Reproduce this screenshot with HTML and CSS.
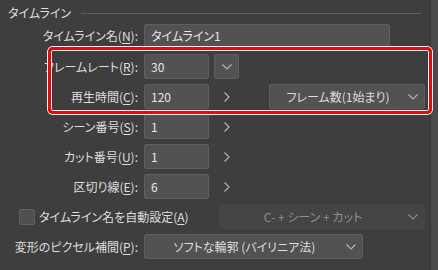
FILE: index.html
```html
<!DOCTYPE html>
<html lang="ja">
<head>
  <meta charset="UTF-8">
  <title>タイムライン</title>
  <link rel="stylesheet" href="styles.css">
</head>
<body>
  <div class="window">
    <div class="panel">
      <div class="section-head">
        <span class="section-title">タイムライン</span>
        <span class="section-line"></span>
      </div>

      <div class="row first">
        <label class="lbl">タイムライン名(<u>N</u>):</label>
        <div class="field wide">タイムライン1</div>
      </div>

      <div class="row">
        <label class="lbl">フレームレート(<u>R</u>):</label>
        <div class="field num">30</div>
        <div class="btn">
          <svg width="10" height="6" viewBox="0 0 10 6"><polyline points="0.5,0.5 5,5 9.5,0.5" /></svg>
        </div>
      </div>

      <div class="row">
        <label class="lbl">再生時間(<u>C</u>):</label>
        <div class="field num">120</div>
        <div class="arrow">
          <svg width="6" height="10" viewBox="0 0 6 10"><polyline points="0.5,0.5 5,5 0.5,9.5" /></svg>
        </div>
        <div class="select frames">
          <span class="select-text">フレーム数(1始まり)</span>
          <svg class="chev" width="10" height="6" viewBox="0 0 10 6"><polyline points="0.5,0.5 5,5 9.5,0.5" /></svg>
        </div>
      </div>

      <div class="row">
        <label class="lbl">シーン番号(<u>S</u>):</label>
        <div class="field num">1</div>
        <div class="arrow">
          <svg width="6" height="10" viewBox="0 0 6 10"><polyline points="0.5,0.5 5,5 0.5,9.5" /></svg>
        </div>
      </div>

      <div class="row">
        <label class="lbl">カット番号(<u>U</u>):</label>
        <div class="field num">1</div>
        <div class="arrow">
          <svg width="6" height="10" viewBox="0 0 6 10"><polyline points="0.5,0.5 5,5 0.5,9.5" /></svg>
        </div>
      </div>

      <div class="row">
        <label class="lbl">区切り線(<u>E</u>):</label>
        <div class="field num">6</div>
        <div class="arrow">
          <svg width="6" height="10" viewBox="0 0 6 10"><polyline points="0.5,0.5 5,5 0.5,9.5" /></svg>
        </div>
      </div>

      <div class="row">
        <span class="check"></span>
        <span class="check-label">タイムライン名を自動設定(<u>A</u>)</span>
        <div class="select auto disabled">
          <span class="select-text">C- + シーン + カット</span>
          <svg class="chev" width="10" height="6" viewBox="0 0 10 6"><polyline points="0.5,0.5 5,5 9.5,0.5" /></svg>
        </div>
      </div>

      <div class="row">
        <label class="lbl">変形のピクセル補間(<u>P</u>):</label>
        <div class="select interp">
          <span class="select-text">ソフトな輪郭 (バイリニア法)</span>
          <svg class="chev" width="10" height="6" viewBox="0 0 10 6"><polyline points="0.5,0.5 5,5 9.5,0.5" /></svg>
        </div>
      </div>

      <div class="highlight"></div>
    </div>
    <div class="scrollbar"></div>
  </div>
</body>
</html>
```

FILE: styles.css
```css
body { margin: 0; background: #3e3e3e; font-family: "Noto Sans CJK JP", "Noto Sans", sans-serif; font-size: 12px; color: #dedede; font-feature-settings: "palt"; }
.window { display: flex; width: 438px; height: 270px; overflow: hidden; }
.panel { position: relative; width: 425px; padding: 1px 5px 0 0; }
.scrollbar { width: 7px; background: #4a4a4a; border-left: 1px solid #383838; }

.section-head { display: flex; align-items: center; height: 23px; padding-left: 8px; }
.section-title { line-height: 23px; }
.section-line { flex: 1; height: 1px; background: #5c5c5c; margin: 1px 4px 0 10px; }

.row { display: flex; align-items: center; height: 25px; margin-bottom: 5px; }
.row.first { height: 23px; margin-bottom: 7px; }
.lbl { width: 138px; text-align: right; white-space: nowrap; }
u { text-decoration-thickness: 1px; text-underline-offset: 2px; }

.field { box-sizing: border-box; height: 100%; margin-left: 6px; background: #525252; border: 1px solid #5e5e5e; border-radius: 2px; padding-left: 6px; display: flex; align-items: center; color: #e6e6e6; }
.field.wide { width: 246px; }
.field.num { width: 65px; }

.btn { box-sizing: border-box; width: 25px; height: 100%; margin-left: 5px; background: #525252; border: 1px solid #5e5e5e; border-radius: 2px; display: flex; align-items: center; justify-content: center; }
.arrow { width: 25px; margin-left: 5px; display: flex; justify-content: center; }
svg polyline { fill: none; stroke: #b4b4b4; stroke-width: 1.2; }

.select { box-sizing: border-box; height: 100%; background: #525252; border: 1px solid #5e5e5e; border-radius: 2px; display: flex; align-items: center; padding-right: 18px; position: relative; }
.select-text { flex: 1; text-align: center; white-space: nowrap; }
.chev { position: absolute; right: 6px; top: 50%; margin-top: -3px; }
.select.frames { width: 156px; margin-left: 30px; }
.select.auto { width: 206px; margin-left: auto; }
.select.interp { width: 219px; margin-left: 6px; }
.select.disabled { background: #444444; border-color: #444444; color: #8e8e8e; }
.select.disabled svg polyline { stroke: #8e8e8e; }

.check { box-sizing: border-box; width: 16px; height: 16px; margin-left: 19px; background: #505050; border: 1px solid #606060; border-radius: 2px; }
.check-label { margin-left: 4px; white-space: nowrap; }

.highlight { position: absolute; left: 48px; top: 47px; width: 378px; height: 61px; border: 3px solid #ff0000; border-radius: 5px; box-shadow: 0 0 0 1px #ffffff, inset 0 0 0 1px #ffffff; pointer-events: none; }
```
